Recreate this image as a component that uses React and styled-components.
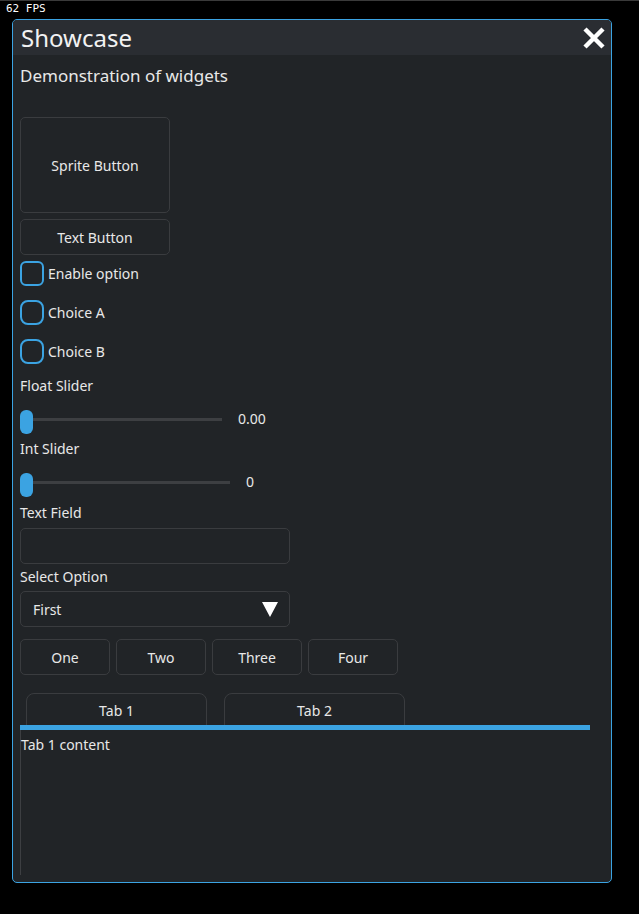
import React from 'react';
import styled, { createGlobalStyle } from 'styled-components';

const GlobalStyle = createGlobalStyle`
  html, body {
    margin: 0;
    padding: 0;
    background: #000;
  }
  body {
    font-family: "Noto Sans", "Open Sans", sans-serif;
    color: #e8e8e8;
  }
`;

const accent = '#3ba3e2';
const edge = '#3a3c3f';

function App() {
  return (
    <>
      <GlobalStyle />
      <Screen>
        <Fps>62 FPS</Fps>
        <Window>
          <TitleBar>
            <Title>Showcase</Title>
            <CloseIcon width="24" height="22" viewBox="0 0 24 22">
              <path d="M3 2 L21 20 M21 2 L3 20" stroke="#fff" strokeWidth="4.5" />
            </CloseIcon>
          </TitleBar>
          <Body>
            <Subtitle>Demonstration of widgets</Subtitle>
            <SpriteButton>Sprite Button</SpriteButton>
            <TextButton>Text Button</TextButton>
            <CheckRow $top={6}>
              <CheckBox />
              <span>Enable option</span>
            </CheckRow>
            <CheckRow $top={14}>
              <CheckBox $round />
              <span>Choice A</span>
            </CheckRow>
            <CheckRow $top={14}>
              <CheckBox $round />
              <span>Choice B</span>
            </CheckRow>
            <Label $top={12}>Float Slider</Label>
            <SliderRow>
              <Track $width={202}>
                <Thumb />
              </Track>
              <SliderValue>0.00</SliderValue>
            </SliderRow>
            <Label $top={4}>Int Slider</Label>
            <SliderRow>
              <Track $width={210}>
                <Thumb />
              </Track>
              <SliderValue>0</SliderValue>
            </SliderRow>
            <Label $top={5}>Text Field</Label>
            <Field />
            <Label $top={3}>Select Option</Label>
            <Select>
              <span>First</span>
              <svg width="16" height="16" viewBox="0 0 16 16">
                <polygon points="0,1 16,1 8,16" fill="#fff" />
              </svg>
            </Select>
            <ButtonGroup>
              <GroupButton>One</GroupButton>
              <GroupButton>Two</GroupButton>
              <GroupButton>Three</GroupButton>
              <GroupButton>Four</GroupButton>
            </ButtonGroup>
            <Tabs>
              <TabRow>
                <Tab>Tab 1</Tab>
                <Tab>Tab 2</Tab>
              </TabRow>
              <TabBar />
              <TabPane>Tab 1 content</TabPane>
            </Tabs>
          </Body>
        </Window>
      </Screen>
    </>
  );
}

const Screen = styled.div`
  width: 639px;
  height: 914px;
  border-top: 1px solid #3a3a3a;
  box-sizing: border-box;
  display: flex;
  flex-direction: column;
  background: #000;
`;

const Fps = styled.div`
  height: 18px;
  padding-left: 6px;
  font-family: "DejaVu Sans Mono", monospace;
  font-size: 11px;
  line-height: 16px;
  color: #fff;
`;

const Window = styled.div`
  margin-left: 12px;
  width: 600px;
  height: 864px;
  box-sizing: border-box;
  border: 1px solid ${accent};
  border-radius: 5px;
  background: #212427;
  display: flex;
  flex-direction: column;
  overflow: hidden;
`;

const TitleBar = styled.div`
  height: 35px;
  background: #2a2d32;
  display: flex;
  align-items: center;
  justify-content: space-between;
  padding: 0 5px 0 8px;
`;

const Title = styled.div`
  font-size: 24px;
  line-height: 35px;
  color: #f2f2f2;
`;

const CloseIcon = styled.svg`
  display: block;
`;

const Body = styled.div`
  flex: 1;
  display: flex;
  flex-direction: column;
  align-items: flex-start;
  padding: 0 21px 7px 7px;
  font-size: 14px;
`;

const Subtitle = styled.div`
  margin-top: 10px;
  font-size: 17px;
  line-height: 22px;
`;

const ButtonBase = styled.div`
  box-sizing: border-box;
  border: 1px solid ${edge};
  border-radius: 5px;
  display: flex;
  align-items: center;
  justify-content: center;
  font-size: 14px;
  color: #e8e8e8;
`;

const SpriteButton = styled(ButtonBase)`
  margin-top: 30px;
  width: 150px;
  height: 96px;
`;

const TextButton = styled(ButtonBase)`
  margin-top: 6px;
  width: 150px;
  height: 36px;
`;

const CheckRow = styled.div`
  margin-top: ${(p) => p.$top}px;
  height: 25px;
  display: flex;
  align-items: center;
  gap: 4px;
  font-size: 14px;
`;

const CheckBox = styled.div`
  width: 24px;
  height: 25px;
  box-sizing: border-box;
  border: 2px solid ${accent};
  border-radius: ${(p) => (p.$round ? '8px' : '6px')};
`;

const Label = styled.div`
  margin-top: ${(p) => p.$top}px;
  line-height: 20px;
  font-size: 14px;
`;

const SliderRow = styled.div`
  margin-top: 15px;
  height: 24px;
  display: flex;
  align-items: flex-start;
`;

const Track = styled.div`
  position: relative;
  margin-top: 7px;
  width: ${(p) => p.$width}px;
  height: 3px;
  background: #3d3f42;
`;

const Thumb = styled.div`
  position: absolute;
  left: 0;
  top: -8px;
  width: 13px;
  height: 24px;
  border-radius: 6px;
  background: ${accent};
`;

const SliderValue = styled.div`
  margin-left: 16px;
  line-height: 20px;
  margin-top: -2px;
`;

const Field = styled.div`
  margin-top: 5px;
  width: 270px;
  height: 36px;
  box-sizing: border-box;
  border: 1px solid ${edge};
  border-radius: 5px;
`;

const Select = styled(Field)`
  margin-top: 4px;
  display: flex;
  align-items: center;
  justify-content: space-between;
  padding: 0 11px 0 12px;
`;

const ButtonGroup = styled.div`
  margin-top: 12px;
  display: flex;
  gap: 6px;
`;

const GroupButton = styled(ButtonBase)`
  width: 90px;
  height: 36px;
`;

const Tabs = styled.div`
  margin-top: 18px;
  width: 570px;
  flex: 1;
  display: flex;
  flex-direction: column;
`;

const TabRow = styled.div`
  display: flex;
  gap: 17px;
  padding-left: 6px;
  height: 32px;
  overflow: hidden;
`;

const Tab = styled.div`
  width: 181px;
  height: 40px;
  box-sizing: border-box;
  border: 1px solid ${edge};
  border-radius: 8px 8px 0 0;
  display: flex;
  justify-content: center;
  padding-top: 7px;
  font-size: 14px;
`;

const TabBar = styled.div`
  height: 5px;
  background: ${accent};
`;

const TabPane = styled.div`
  flex: 1;
  border-left: 1px solid #3d3f42;
  padding-top: 5px;
  line-height: 20px;
  font-size: 14px;
`;

export default App;
